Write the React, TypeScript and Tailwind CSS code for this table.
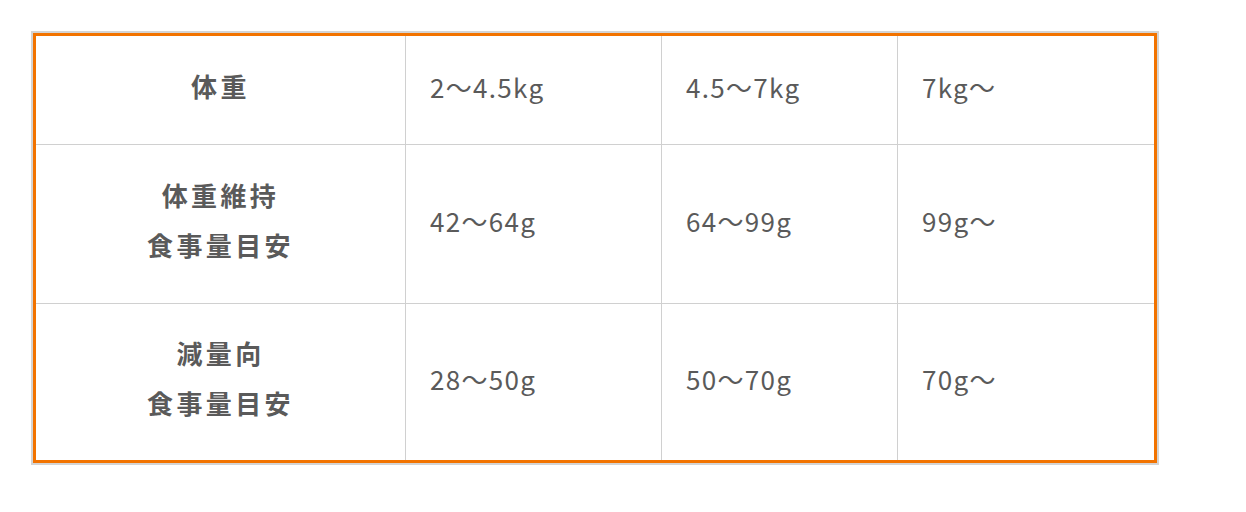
const ROWS = [
  { head: ["体重"], cells: ["2～4.5kg", "4.5～7kg", "7kg～"], h: "h-[108px]" },
  { head: ["体重維持", "食事量目安"], cells: ["42～64g", "64～99g", "99g～"], h: "h-[159px]" },
  { head: ["減量向", "食事量目安"], cells: ["28～50g", "50～70g", "70g～"], h: "h-[157px]" },
];

export default function App() {
  return (
    <div className="min-h-screen bg-white pt-[31px] pl-[31px] font-['Noto_Sans_CJK_JP',sans-serif] text-[#5a5a5a]">
      <div className="w-[1128px] border-2 border-[#d4d4d4]">
        <div className="border-[3px] border-[#f27300]">
          {ROWS.map((row, i) => (
            <div
              key={i}
              className={`grid grid-cols-[369px_256px_236px_1fr] ${row.h} ${i > 0 ? "border-t border-[#d0d0d0]" : ""}`}
            >
              <div className="flex flex-col items-center justify-center pb-[8px] text-[26px] font-bold leading-[50px] tracking-[0.13em]">
                {row.head.map((t) => (
                  <span key={t}>{t}</span>
                ))}
              </div>
              {row.cells.map((c) => (
                <div
                  key={c}
                  className="flex items-center border-l border-[#d0d0d0] pb-[8px] pl-[24px] text-[26px] tracking-[0.05em]"
                >
                  {c}
                </div>
              ))}
            </div>
          ))}
        </div>
      </div>
    </div>
  );
}
